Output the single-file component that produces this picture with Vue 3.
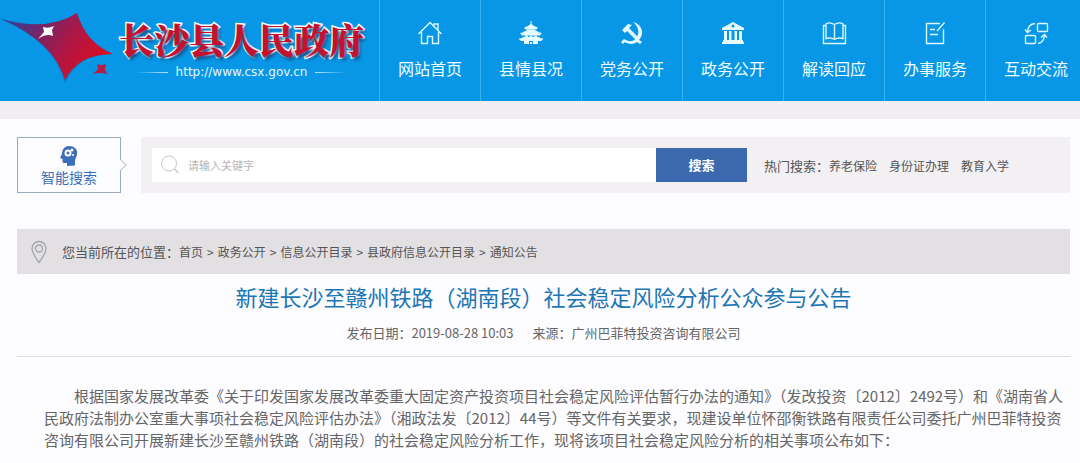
<script setup>
const nav = [
  { label: '网站首页', icon: 'home' },
  { label: '县情县况', icon: 'pagoda' },
  { label: '党务公开', icon: 'party' },
  { label: '政务公开', icon: 'bank' },
  { label: '解读回应', icon: 'book' },
  { label: '办事服务', icon: 'form' },
  { label: '互动交流', icon: 'exchange' },
]
const hot = ['养老保险', '身份证办理', '教育入学']
const crumbs = ['首页', '政务公开', '信息公开目录', '县政府信息公开目录', '通知公告']
</script>

<template>
  <div class="page">
    <header class="header">
      <a class="brand" href="#">
        <svg class="emblem" viewBox="0 0 115 84" width="115" height="84" aria-hidden="true">
          <defs>
            <linearGradient id="star" x1="0" y1="0.2" x2="1" y2="0.6">
              <stop offset="0" stop-color="#2f3f9c" />
              <stop offset="0.35" stop-color="#7c2363" />
              <stop offset="0.65" stop-color="#b51540" />
              <stop offset="1" stop-color="#e00c20" />
            </linearGradient>
          </defs>
          <path class="shade" d="M1 19 Q48 32 77 13 Q86 43 113 54 Q78 54 65 83 Q54 42 1 19Z" fill="#1c5a9c" />
          <path d="M1 19 Q48 32 77 13 Q86 43 113 54 Q78 54 65 80 Q54 42 1 19Z" fill="url(#star)" />
          <path d="M43 27 Q48 29 54 26 L52 30 L53 36 Q46 33 38 39 L44 32Z" fill="#fff" />
          <path d="M97 64 Q101 66 106 64 L105 69 L107 74 Q100 72 93 74 L98 69Z" fill="#b31c45" />
        </svg>
        <span class="brand-text">
          <span class="brand-name">长沙县人民政府</span>
          <span class="brand-url"><i class="dash left"></i>http://www.csx.gov.cn<i class="dash right"></i></span>
        </span>
      </a>
      <nav class="nav">
        <a v-for="item in nav" :key="item.label" class="nav-item" href="#">
          <svg class="nav-icon" viewBox="0 0 26 24" width="26" height="24" aria-hidden="true">
            <g v-if="item.icon === 'home'" class="line">
              <path d="M1.5 13 13 1.5 24.5 13M17 4.5V3H21V9M4.5 11V22.5H10.5V15.5H15.5V22.5H21.5V11" />
            </g>
            <g v-else-if="item.icon === 'pagoda'" class="solid">
              <path d="M12.5 0h1v3q2 2.500 6.500 3.500L18.500 8.500H7.500L6 6.500Q10.500 5.500 12.500 3z" />
              <path d="M8.500 8.500h9v2h-9z" />
              <path d="M7 10h12q2 2 5 2l-2 2.500H4L2 12q3 0 5-2z" />
              <path d="M7 14.500h3v2H7zM11.500 14.500h3v2h-3zM16 14.500h3v2h-3z" />
              <path d="M5.500 16h15q2 1.500 5 1.500L23 20H3L.5 17.500q3 0 5-1.500z" />
              <path d="M6 20h5v3H6zM12 21h2v2h-2zM15 20h5v3h-5z" />
            </g>
            <g v-else-if="item.icon === 'party'" class="solid">
              <path d="M14 1c9 2 12 12 6 18l3 2-2 2-3-2c-4 3-9 2-12 0l-2 2-2-2 3-3 2 1c5 3 9 0 11-3C21 11 19 5 14 1z" />
              <path d="M3 9l6-6 4 1-3 3 10 10-2 3L8 10l-2 2z" />
            </g>
            <g v-else-if="item.icon === 'bank'" class="solid">
              <path d="M13 1l11 6v2H2V7zM4 10h3v9H4zM9 10h2.5v9H9zM14.5 10H17v9h-2.500zM19 10h3v9h-3zM3 19h20v2H3zM2 21h22v2H2z" />
              <circle cx="13" cy="5" r="1.5" fill="#0797e6" />
            </g>
            <g v-else-if="item.icon === 'book'" class="line">
              <path d="M4.5 4.5H2.5V22.5H24.5V4.5H22.5M13.5 3.5Q8 .5 5 3V17.5Q10 16 13.5 18.5Q17 16 22 17.5V3Q18 .5 13.5 3.5V18" />
            </g>
            <g v-else-if="item.icon === 'form'" class="line">
              <path d="M18 2.5H4.5V22.5H21.5V8M8 8.5H13M8 13.5H16M22.5 1.5 15 10" />
            </g>
            <g v-else class="line">
              <rect x="14.5" y="2.5" width="10" height="8" rx="1" />
              <rect x="2.5" y="14.5" width="10" height="8" rx="1" />
              <path d="M12 2.5Q5 3 4.5 11M2 8.5 4.5 11.5 8 9M15 22.5Q21 21.5 21.5 14M18 16.5 21.5 13.5 24 16.5" />
            </g>
          </svg>
          <span>{{ item.label }}</span>
        </a>
      </nav>
    </header>

    <main class="main">
      <section class="search-row">
        <a class="smart" href="#">
          <svg viewBox="0 0 18 20" width="18" height="20" aria-hidden="true">
            <path d="M9 0C14 0 18 3 17 8c0 3-2 4-2 7v4.500L7 20v-3H3.500c-1 0-1-2-1-4L0 12l2-4C2 3 5 0 9 0z" fill="#3b6fba" />
            <circle cx="8" cy="7" r="2.500" fill="none" stroke="#fff" stroke-width="2" />
            <circle cx="12" cy="4" r="1.500" fill="#fff" />
            <circle cx="13" cy="9" r="1" fill="#fff" />
          </svg>
          <span>智能搜索</span>
        </a>
        <form class="search-panel" @submit.prevent>
          <label class="field">
            <svg viewBox="0 0 20 20" width="20" height="20" aria-hidden="true">
              <circle cx="9" cy="8.500" r="7.500" fill="none" stroke="#c8c8cc" />
              <path d="M14.500 14 18.500 18" stroke="#c8c8cc" stroke-width="1.500" />
            </svg>
            <input type="text" placeholder="请输入关键字" aria-label="请输入关键字" />
          </label>
          <button class="submit" type="submit">搜索</button>
          <div class="hot">
            <span class="hot-label">热门搜索：</span>
            <div class="hot-words">
              <a v-for="word in hot" :key="word" href="#">{{ word }}</a>
            </div>
          </div>
        </form>
      </section>

      <nav class="crumbs">
        <svg viewBox="0 0 16 24" width="16" height="24" aria-hidden="true">
          <path d="M8 22.500Q1 13 1 8.500A7 7 0 0 1 15 8.500Q15 13 8 22.500Z" />
          <circle cx="8" cy="8.500" r="3.500" />
        </svg>
        <span class="crumb-label">您当前所在的位置：</span>
        <template v-for="(crumb, i) in crumbs" :key="crumb">
          <span v-if="i" class="sep">&gt;</span>
          <a href="#">{{ crumb }}</a>
        </template>
      </nav>

      <article>
        <h1>新建长沙至赣州铁路（湖南段）社会稳定风险分析公众参与公告</h1>
        <div class="meta">
          <span>发布日期：2019-08-28 10:03</span>
          <span>来源：广州巴菲特投资咨询有限公司</span>
        </div>
        <p class="body">根据国家发展改革委《关于印发国家发展改革委重大固定资产投资项目社会稳定风险评估暂行办法的通知》（发改投资〔2012〕2492号）和《湖南省人民政府法制办公室重大事项社会稳定风险评估办法》（湘政法发〔2012〕44号）等文件有关要求，现建设单位怀邵衡铁路有限责任公司委托广州巴菲特投资咨询有限公司开展新建长沙至赣州铁路（湖南段）的社会稳定风险分析工作，现将该项目社会稳定风险分析的相关事项公布如下：</p>
      </article>
    </main>
  </div>
</template>

<style>
body {
  margin: 0;
  background: #fdfcfe;
}
</style>

<style scoped>
.page {
  font-family: "Noto Sans CJK SC", "Noto Sans", sans-serif;
  color: #555;
  overflow: hidden;
}
a {
  color: inherit;
  text-decoration: none;
}
.header {
  display: flex;
  height: 101px;
  background: #0797e6;
  border-bottom: 18px solid #f0eef1;
}
.brand {
  display: flex;
  flex: 0 0 379px;
}
.emblem {
  flex: none;
}
.shade {
  opacity: 0.5;
}
.brand-text {
  display: flex;
  flex-direction: column;
  padding: 13px 0 0 4px;
}
.brand-name {
  font-family: "Noto Serif CJK SC", "Noto Sans CJK SC", serif;
  font-size: 35px;
  line-height: 52px;
  font-weight: 900;
  color: #c3112f;
  -webkit-text-stroke: 3px #fff;
  paint-order: stroke fill;
  text-shadow: 2px 3px 3px #15538a;
  white-space: nowrap;
}
.brand-url {
  display: flex;
  align-items: center;
  justify-content: center;
  gap: 8px;
  font: 12px/15px "DejaVu Sans", sans-serif;
  color: #e2f8ff;
}
.dash {
  width: 32px;
  height: 1px;
}
.dash.left {
  background: linear-gradient(to right, transparent, #b8e6fb);
}
.dash.right {
  background: linear-gradient(to left, transparent, #b8e6fb);
}
.nav {
  display: flex;
}
.nav-item {
  box-sizing: border-box;
  flex: 0 0 101px;
  display: flex;
  flex-direction: column;
  align-items: center;
  gap: 11px;
  padding-top: 21px;
  border-left: 1px solid #39b1ef;
  font-size: 16px;
  line-height: 24px;
  color: #effcff;
}
.line {
  fill: none;
  stroke: #dcf8ff;
  stroke-width: 1.4;
}
.solid {
  fill: #e6fbff;
}
.main {
  padding: 18px 10px 0 17px;
}
.search-row {
  display: flex;
  gap: 20px;
}
.smart {
  position: relative;
  box-sizing: border-box;
  flex: 0 0 104px;
  height: 56px;
  display: flex;
  flex-direction: column;
  align-items: center;
  padding-top: 8px;
  border: 1px solid #9aa9bf;
  font-size: 14px;
  line-height: 22px;
  color: #3b6fba;
}
.smart::after {
  content: "";
  position: absolute;
  right: -5px;
  top: 23px;
  width: 7px;
  height: 7px;
  border: solid #b9c2cf;
  border-width: 1px 1px 0 0;
  background: #fdfcfe;
  transform: rotate(45deg);
}
.search-panel {
  flex: 1;
  display: flex;
  align-items: center;
  padding: 0 11px;
  background: #f2f0f3;
}
.field {
  flex: 0 0 504px;
  box-sizing: border-box;
  display: flex;
  align-items: center;
  gap: 8px;
  height: 34px;
  padding-left: 8px;
  background: #fff;
}
.field input {
  flex: 1;
  padding: 0;
  border: 0;
  outline: 0;
  background: none;
  font: 11px/20px "Noto Sans CJK SC", sans-serif;
  color: #555;
}
.field input::placeholder {
  color: #b5b5b9;
}
.submit {
  flex: 0 0 91px;
  height: 34px;
  padding: 0;
  border: 0;
  background: #3c68ae;
  font: bold 13px/20px "Noto Sans CJK SC", sans-serif;
  color: #fff;
}
.hot {
  display: flex;
  align-items: center;
  padding-left: 17px;
  font-size: 12px;
  white-space: nowrap;
}
.hot-label {
  font-size: 13px;
}
.hot-words {
  display: flex;
  gap: 12px;
}
.crumbs {
  display: flex;
  align-items: center;
  height: 45px;
  margin-top: 36px;
  padding-left: 14px;
  background: #e2e0e3;
  font-size: 12px;
}
.crumbs svg {
  margin-right: 15px;
  fill: none;
  stroke: #a5a5a8;
  stroke-width: 1.3;
}
.crumb-label {
  font-size: 13px;
}
.sep {
  padding: 0 4px;
}
h1 {
  margin: 6px 0 0;
  text-align: center;
  font-size: 22px;
  line-height: 32px;
  font-weight: 400;
  color: #1b76b5;
}
.meta {
  display: flex;
  justify-content: center;
  gap: 19px;
  padding: 11px 0 13px;
  border-bottom: 1px solid #dadce2;
  font-size: 13px;
  line-height: 20px;
  color: #666;
}
.body {
  margin: 28px 0 0;
  padding-left: 27px;
  text-indent: 2em;
  font-size: 15px;
  line-height: 22px;
  color: #666;
}
</style>
